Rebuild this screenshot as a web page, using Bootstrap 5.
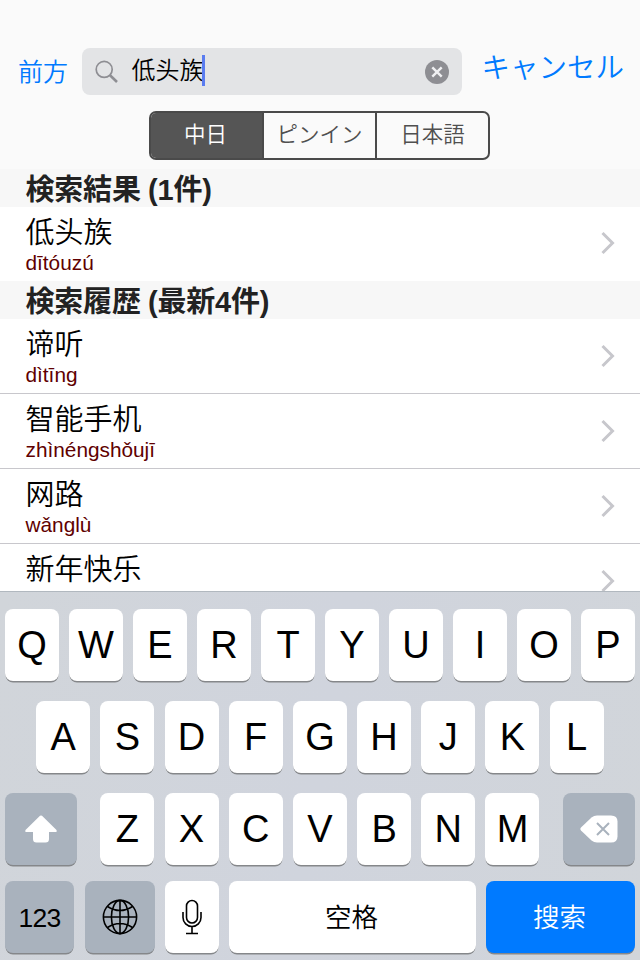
<!DOCTYPE html>
<html lang="ja">
<head>
<meta charset="utf-8">
<meta name="viewport" content="width=device-width, initial-scale=1">
<title>中日辞書</title>
<link href="https://cdn.jsdelivr.net/npm/bootstrap@5.3.0/dist/css/bootstrap.min.css" rel="stylesheet">
<style>
  body { font-family: "Liberation Sans", "Noto Sans CJK JP", sans-serif; width: 640px; height: 960px; background: #fff; color: #000; }
  :lang(zh) { font-family: "Liberation Sans", "Noto Sans CJK SC", sans-serif; }
  .cjk-thin { font-weight: 350; }
  .top-area { height: 169px; background: #fafafa; padding: 48px 16px 0 18px; }
  .link-btn { color: #007aff; white-space: nowrap; line-height: 48px; padding: 0; border: 0; background: none; }
  .mode-btn { font-size: 25px; width: 64px; text-align: left; line-height: 46px; }
  .cancel-btn { font-size: 28.5px; line-height: 41px; margin-left: 19px; align-self: flex-start; }
  .search-field { width: 381px; height: 47px; background: #e3e4e6; border-radius: 8px; padding: 0 13px; }
  .search-text { font-size: 24px; line-height: 46px; margin-left: 12.5px; margin-top: -1px; }
  .caret { width: 3px; height: 31px; background: #5a7cf0; margin-left: -1px; margin-top: -2px; }
  .segments { width: 341px; height: 49px; margin: 16px 0 0 131px; border: 2px solid #4a4a4a; border-radius: 7px; overflow: hidden; }
  .segment { width: 114px; font-size: 21.5px; line-height: 45px; text-align: center; color: #4f4f4f; border: 0; background: none; padding: 0; }
  .segment + .segment { border-left: 2px solid #4a4a4a; }
  .segment.on { background: #555; color: #fff; width: 112px; padding-right: 2px; }
  .section-title { height: 38px; background: #f7f7f7; color: #222; font-size: 29px; font-weight: 700; line-height: 42px; padding-left: 25.5px; margin: 0; letter-spacing: -.2px; word-spacing: -.5px; }
  .entry { height: 75px; padding: 9px 25px 0 25.5px; border-bottom: 1px solid #c8c7cc; }
  .entry.solo { height: 74px; border: 0; }
  .entry.cut { height: 47px; border: 0; overflow: hidden; }
  .word { font-size: 29px; line-height: 35px; }
  .pinyin { font-size: 20.8px; line-height: 24px; color: #600000; }
  .chevron { margin-top: 16px; }
  .entry.solo .chevron { margin-top: 15px; }
  .keyboard { height: 369px; background: linear-gradient(100deg, #d1d5da, #d0d4dd 50%, #d1d5da); border-top: 1px solid #b1b8bf; padding: 17px 5px 0; }
  .key { width: 54px; height: 72px; background: #fff; border: 0; border-radius: 8px; box-shadow: 0 2px 0 -.5px #85878a; font-size: 38px; line-height: 73px; padding: 0; text-align: center; color: #000; flex: none; }
  .key-row { gap: 10px; height: 92px; }
  .dim { background: #a9b2bd; }
  .key-mod { width: 72px; }
  .row-z .key { margin-right: .2px; }
  .row-last { height: 73px; margin-top: -4px; }
  .small-label { font-size: 26.5px; line-height: 75px; padding-right: 2px; }
  .num-label { font-size: 26.5px; letter-spacing: -.8px; line-height: 74px; }
  .key-go { background: #007aff; color: #fff; width: 149px; }
</style>
<script src="https://cdn.jsdelivr.net/npm/bootstrap@5.3.0/dist/js/bootstrap.bundle.min.js"></script>
</head>
<body class="overflow-hidden">
<header class="top-area">
  <div class="d-flex">
    <button class="link-btn mode-btn cjk-thin">前方</button>
    <div class="search-field d-flex align-items-center">
      <svg width="24" height="24" viewBox="0 0 24 24" fill="none" stroke="#8e8e93"><circle cx="9.2" cy="9.4" r="8" stroke-width="1.7"/><path d="M15 15.3 22 22" stroke-width="2.6"/></svg>
      <span class="search-text cjk-thin" lang="zh">低头族</span><span class="caret"></span>
      <svg class="ms-auto" width="24" height="24" viewBox="0 0 24 24"><circle cx="12" cy="12" r="12" fill="#8e8e93"/><path d="M7.3 7.3 16.7 16.7M16.7 7.3 7.3 16.7" stroke="#f0f0f2" stroke-width="2.4"/></svg>
    </div>
    <button class="link-btn cancel-btn cjk-thin">キャンセル</button>
  </div>
  <div class="segments d-flex">
    <button class="segment on cjk-thin">中日</button>
    <button class="segment cjk-thin">ピンイン</button>
    <button class="segment cjk-thin">日本語</button>
  </div>
</header>
<main>
  <h2 class="section-title">検索結果 (1件)</h2>
  <div class="entry solo d-flex justify-content-between">
    <div><div class="word cjk-thin" lang="zh">低头族</div><div class="pinyin">dītóuzú</div></div>
    <svg class="chevron" width="14" height="24" viewBox="0 0 14 24" fill="none" stroke="#c7c7cc" stroke-width="3"><path d="M1.5 2 11.5 12 1.5 22"/></svg>
  </div>
  <h2 class="section-title">検索履歴 (最新4件)</h2>
  <div class="entry d-flex justify-content-between">
    <div><div class="word cjk-thin" lang="zh">谛听</div><div class="pinyin">dìtīng</div></div>
    <svg class="chevron" width="14" height="24" viewBox="0 0 14 24" fill="none" stroke="#c7c7cc" stroke-width="3"><path d="M1.5 2 11.5 12 1.5 22"/></svg>
  </div>
  <div class="entry d-flex justify-content-between">
    <div><div class="word cjk-thin" lang="zh">智能手机</div><div class="pinyin">zhìnéngshǒujī</div></div>
    <svg class="chevron" width="14" height="24" viewBox="0 0 14 24" fill="none" stroke="#c7c7cc" stroke-width="3"><path d="M1.5 2 11.5 12 1.5 22"/></svg>
  </div>
  <div class="entry d-flex justify-content-between">
    <div><div class="word cjk-thin" lang="zh">网路</div><div class="pinyin">wǎnglù</div></div>
    <svg class="chevron" width="14" height="24" viewBox="0 0 14 24" fill="none" stroke="#c7c7cc" stroke-width="3"><path d="M1.5 2 11.5 12 1.5 22"/></svg>
  </div>
  <div class="entry cut d-flex justify-content-between">
    <div><div class="word cjk-thin" lang="zh">新年快乐</div></div>
    <svg class="chevron flex-shrink-0" width="14" height="24" viewBox="0 0 14 24" fill="none" stroke="#c7c7cc" stroke-width="3"><path d="M1.5 2 11.5 12 1.5 22"/></svg>
  </div>
</main>
<section class="keyboard">
  <div class="key-row d-flex">
    <button class="key">Q</button><button class="key">W</button><button class="key">E</button><button class="key">R</button><button class="key">T</button><button class="key">Y</button><button class="key">U</button><button class="key">I</button><button class="key">O</button><button class="key">P</button>
  </div>
  <div class="key-row row-z d-flex justify-content-center">
    <button class="key">A</button><button class="key">S</button><button class="key">D</button><button class="key">F</button><button class="key">G</button><button class="key">H</button><button class="key">J</button><button class="key">K</button><button class="key">L</button>
  </div>
  <div class="key-row d-flex justify-content-between">
    <button class="key key-mod dim d-flex align-items-center justify-content-center"><svg width="34" height="28" viewBox="0 0 34 28" fill="#fff"><path d="M16 .8Q17 0 18 .8L32.5 15Q33.4 17 32 17H25V24Q25 27.500 21.500 27.500H12.500Q9 27.500 9 24V17H2Q.6 17 1.500 15Z"/></svg></button>
    <div class="d-flex row-z key-row"><button class="key">Z</button><button class="key">X</button><button class="key">C</button><button class="key">V</button><button class="key">B</button><button class="key">N</button><button class="key">M</button></div>
    <button class="key key-mod dim d-flex align-items-center justify-content-center"><svg width="38" height="28" viewBox="0 0 38 28"><path d="M1 12.500 11.500 2.500Q14 .5 17 .5H31Q37.500 .5 37.500 6.500V21.500Q37.500 27.500 31 27.500H17Q14 27.500 11.500 25.500L1 15.500Q-.3 14 1 12.500Z" fill="#fff"/><path d="M17 8 29 20M29 8 17 20" stroke="#a9b2bd" stroke-width="2"/></svg></button>
  </div>
  <div class="row-last d-flex">
    <button class="key dim num-label" style="width:69px">123</button>
    <button class="key dim d-flex align-items-center justify-content-center" style="width:70px;margin-left:10.5px"><svg width="36" height="36" viewBox="0 0 36 36" fill="none" stroke="#000" stroke-width="1.6"><circle cx="18" cy="18" r="16.600"/><ellipse cx="18" cy="18" rx="8.600" ry="16.600"/><path d="M18 1.400V34.600M1.400 18H34.600M5.500 7.500Q18 15.500 30.500 7.500M5.500 28.500Q18 20.500 30.500 28.500"/></svg></button>
    <button class="key d-flex align-items-center justify-content-center" style="margin-left:10.5px"><svg width="22" height="36" viewBox="0 0 22 36" fill="none" stroke="#000" stroke-width="1.6"><rect x="5.500" y="1.500" width="11" height="22.500" rx="5.500"/><path d="M2 13V18.500A9 9 0 0 0 20 18.500V13M11 27.500V34.500M5 34.500H17"/></svg></button>
    <button class="key small-label cjk-thin" lang="zh" style="width:247px;margin-left:10px">空格</button>
    <button class="key key-go small-label cjk-thin" lang="zh" style="margin-left:10px">搜索</button>
  </div>
</section>
</body>
</html>
